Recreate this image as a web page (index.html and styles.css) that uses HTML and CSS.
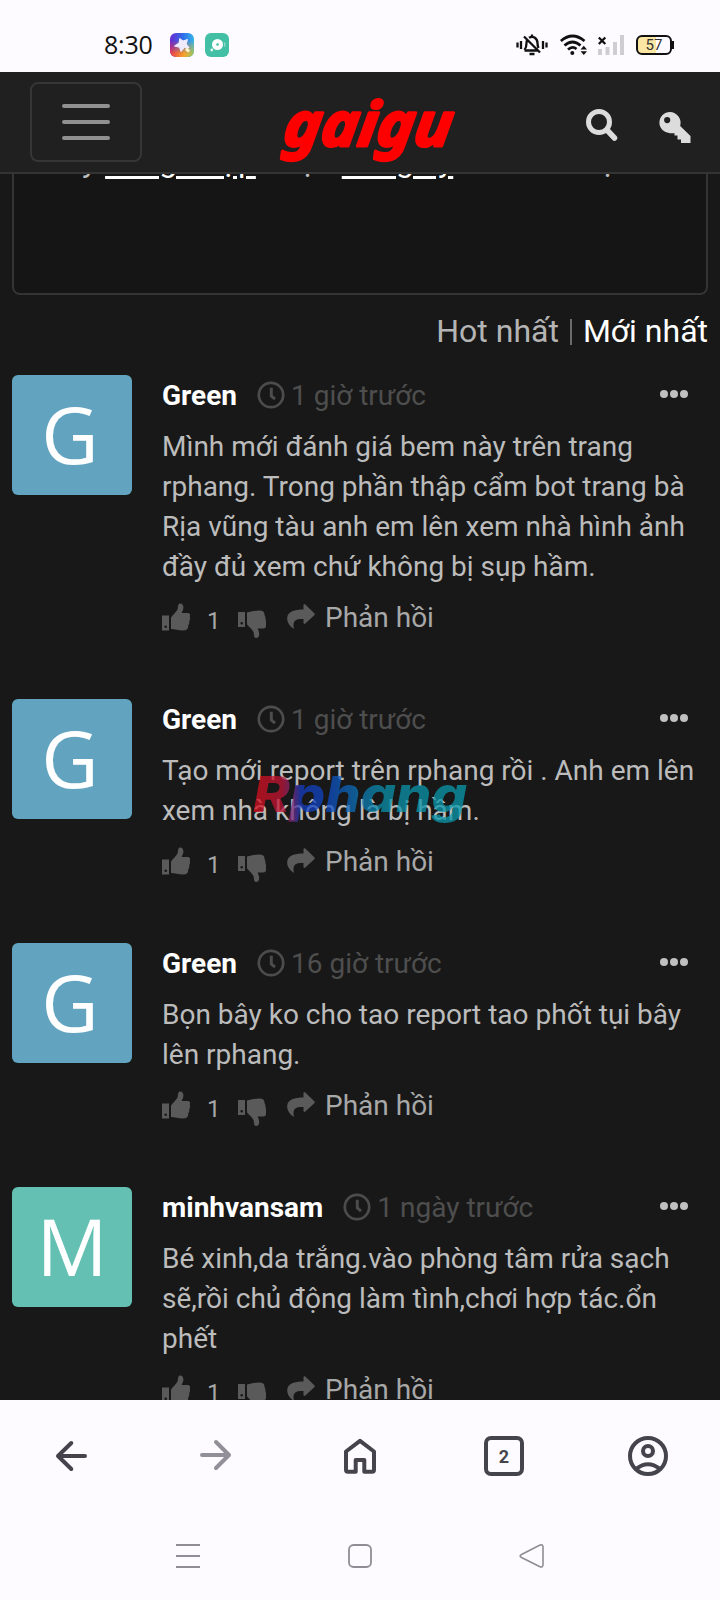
FILE: index.html
```html
<!DOCTYPE html>
<html lang="vi">
<head>
<meta charset="utf-8">
<title>gaigu</title>
<link rel="stylesheet" href="styles.css">
</head>
<body>
<svg width="0" height="0" class="defs">
  <defs>
    <symbol id="clock" viewBox="0 0 28 28"><circle cx="14" cy="14" r="12.2" fill="none" stroke="currentColor" stroke-width="2.7"/><path d="M14.3 6.8v8.2l3.7 3.2" fill="none" stroke="currentColor" stroke-width="3"/></symbol>
    <symbol id="dots" viewBox="0 0 28 8"><circle cx="4" cy="4" r="4"/><circle cx="14" cy="4" r="4"/><circle cx="24" cy="4" r="4"/></symbol>
    <symbol id="thumb" viewBox="0 0 28 28"><path fill-rule="evenodd" d="M0 12.500H7V27.500H0ZM3.700 22.500A1.300 1.300 0 1 0 3.700 25.100A1.300 1.300 0 1 0 3.700 22.500Z"/><path d="M9 14.500C11 11.500 14 9.500 15.500 6.500C16.200 4.500 15.500 1 18 .4C21 .2 21.800 3.500 21.200 6C20.900 7.500 20 8.800 19.700 10H25.500C28.200 10 28.700 12.500 27.800 14C28.200 15.500 28.200 17 27.200 18C27.600 20 27 21.500 26.200 22.500C26.500 25.500 25 27.500 21.500 27.500C16 27.500 13 26 9 26Z"/></symbol>
    <symbol id="thumbdown" viewBox="0 0 28 28"><path fill-rule="evenodd" d="M0 2H7V17H0ZM3.700 12A1.300 1.300 0 1 0 3.700 14.600A1.300 1.300 0 1 0 3.700 12Z"/><path d="M9 2.500C13 1.800 16 .5 21.500 .5C25 .5 26.800 2 26.500 5C27.500 6.500 27.600 8 27.400 9.500C28.400 11 28.400 12.500 27.900 14C28.500 16.500 27.500 18.500 25.500 18.500H19.700C20 20 21.200 22 21.200 24C21.200 26.500 20 28 18 28C15.500 27.800 16.200 24 15.500 22C14 19 11 17 9 14.500Z"/></symbol>
    <symbol id="share" viewBox="0 0 28 26"><path d="M16.500 1.200C16.500 0 17.500 0 18.300 .6L27.300 9.200Q28.300 10.200 27.300 11.200L18.300 19.600C17.500 20.200 16.500 20 16.500 18.800V15C9 14.500 5 16.500 7 25C3 22.500 0 18.500 .2 14C.6 7.500 7.500 5.600 16.500 5.600Z"/></symbol>
  </defs>
</svg>
<div class="screen">
  <header class="status">
    <span class="time">8:30</span>
    <svg class="app" width="24" height="24" viewBox="0 0 24 24">
      <defs><linearGradient id="top" x1="0" x2="1"><stop offset="0" stop-color="#6a2bd0"/><stop offset=".55" stop-color="#2d6ee8"/><stop offset="1" stop-color="#35b6ea"/></linearGradient><linearGradient id="low" x1="0" x2="1" y1=".7" y2="1"><stop offset="0" stop-color="#e7344b"/><stop offset=".6" stop-color="#f5a32c"/><stop offset="1" stop-color="#8bcf6a"/></linearGradient><linearGradient id="fade" x2="0" y2="1"><stop offset=".3" stop-color="#000"/><stop offset=".85" stop-color="#fff"/></linearGradient><mask id="m"><rect width="24" height="24" fill="url(#fade)"/></mask></defs>
      <rect width="24" height="24" rx="6" fill="url(#top)"/><rect width="24" height="24" rx="6" fill="url(#low)" mask="url(#m)"/>
      <path d="M9.800 5.500L13 8L17.500 6.500L16.200 11L19 14.500L14.500 14.500L11 18.500L9.500 14.300L4.500 13L9 10Z" fill="#efeafc" stroke="#efeafc" stroke-width="1" stroke-linejoin="round"/><ellipse cx="17.500" cy="17" rx="2.500" ry="1.700" transform="rotate(40 17.500 17)" fill="#fff3cc"/>
    </svg>
    <svg class="app app-2" width="24" height="24" viewBox="0 0 24 24"><rect width="24" height="24" rx="6" fill="#43bfa6"/><circle cx="12.500" cy="11.500" r="5.500" fill="#fff"/><circle cx="12.500" cy="11.500" r="1.300" fill="#43bfa6"/><circle cx="6.800" cy="17" r="1.400" fill="#e5f7f3"/><path d="M19.500 9.500q1 2 0 4" stroke="#b5e5dc" fill="none"/></svg>
    <div class="indicators">
      <svg width="32" height="22" viewBox="0 0 32 22" fill="none" stroke="#111" stroke-width="2.300"><path d="M1.500 8.500v5M5 7v8M30.500 8.500v5M27 7v8"/><path d="M8.500 16.500H21.500M8.500 16Q10.500 13.500 10.500 9Q10.500 7 11.500 5.500M13 3.800Q16 2 18.500 3.500Q21.500 5.500 21.500 9Q21.500 12 22.500 14M16 .500v2.500M8 2.500L24 18.500M13.500 20h5"/></svg>
      <svg class="wifi" width="28" height="22" viewBox="0 0 28 22" fill="none" stroke="#111" stroke-width="2.700"><path d="M.8 7Q12.500-3 24.500 7M4.500 11.500Q12.500 4.500 20.500 11.500M8 15.500Q12.500 11.500 16.500 15"/><circle cx="12.300" cy="19" r="2" fill="#111" stroke="none"/><path d="M20.500 15.500L23.800 11.800L27 15.500ZM20.500 17.200L23.800 21L27 17.200Z" fill="#111" stroke="none"/></svg>
      <svg class="signal" width="26" height="20" viewBox="0 0 26 20"><path fill="#cfcdd2" d="M0 14h4v6H0zM7.500 12h4v8h-4zM15 7h4v13h-4zM22 0h4v20h-4z"/><path d="M.8 2.500l6.500 6.500m0-6.500L.8 9" stroke="#111" stroke-width="2.300"/></svg>
      <div class="battery">57</div>
    </div>
  </header>
  <nav class="navbar">
    <button class="burger"><i></i><i></i><i></i></button>
    <svg class="logo" width="180" height="80" viewBox="0 0 180 80"><text transform="translate(8 56) skewX(-8)" textLength="168" lengthAdjust="spacingAndGlyphs">gaigu</text></svg>
    <svg class="search" width="34" height="34" viewBox="0 0 34 34" fill="none" stroke="#dcdcdc"><circle cx="14" cy="14" r="10.500" stroke-width="5"/><path d="M22 22l7.500 8" stroke-width="5.500" stroke-linecap="round"/></svg>
    <svg class="key" width="32" height="32" viewBox="0 0 32 32" fill="#dcdcdc"><path fill-rule="evenodd" d="M11 0A11 11 0 0 1 21.200 14L31.500 24V31H22V27.500H18.500V23.500H15.500V21.200H11A10.600 10.600 0 0 1 11 0ZM8.200 5A3.100 3.100 0 1 0 8.200 11.200A3.100 3.100 0 1 0 8.200 5Z"/></svg>
  </nav>
  <main class="page">
    <div class="editor"><p>Hãy <u>đăng nhập</u> <span class="or">hoặc</span> <u class="reg">đăng ký</u> <span class="rest">để bình luận</span></p></div>
    <div class="sort"><span>Hot nhất</span><i></i><b>Mới nhất</b></div>
    <article class="comment">
      <div class="avatar">G</div>
      <div>
        <div class="meta"><strong>Green</strong><svg class="ck"><use href="#clock"/></svg><time>1 giờ trước</time><svg class="more"><use href="#dots"/></svg></div>
        <p class="text">Mình mới đánh giá bem này trên trang<br>rphang. Trong phần thập cẩm bot trang bà<br>Rịa vũng tàu anh em lên xem nhà hình ảnh<br>đầy đủ xem chứ không bị sụp hầm.</p>
        <div class="actions"><svg class="up"><use href="#thumb"/></svg><span class="count">1</span><svg class="down"><use href="#thumbdown"/></svg><svg class="share"><use href="#share"/></svg><span>Phản hồi</span></div>
      </div>
    </article>
    <article class="comment">
      <div class="avatar">G</div>
      <div>
        <div class="meta"><strong>Green</strong><svg class="ck"><use href="#clock"/></svg><time>1 giờ trước</time><svg class="more"><use href="#dots"/></svg></div>
        <p class="text">Tạo mới report trên rphang rồi . Anh em lên<br>xem nhà không là bị hầm.</p>
        <div class="actions"><svg class="up"><use href="#thumb"/></svg><span class="count">1</span><svg class="down"><use href="#thumbdown"/></svg><svg class="share"><use href="#share"/></svg><span>Phản hồi</span></div>
      </div>
    </article>
    <article class="comment">
      <div class="avatar">G</div>
      <div>
        <div class="meta"><strong>Green</strong><svg class="ck"><use href="#clock"/></svg><time>16 giờ trước</time><svg class="more"><use href="#dots"/></svg></div>
        <p class="text">Bọn bây ko cho tao report tao phốt tụi bây<br>lên rphang.</p>
        <div class="actions"><svg class="up"><use href="#thumb"/></svg><span class="count">1</span><svg class="down"><use href="#thumbdown"/></svg><svg class="share"><use href="#share"/></svg><span>Phản hồi</span></div>
      </div>
    </article>
    <article class="comment">
      <div class="avatar green">M</div>
      <div>
        <div class="meta"><strong>minhvansam</strong><svg class="ck"><use href="#clock"/></svg><time>1 ngày trước</time><svg class="more"><use href="#dots"/></svg></div>
        <p class="text">Bé xinh,da trắng.vào phòng tâm rửa sạch<br>sẽ,rồi chủ động làm tình,chơi hợp tác.ổn<br>phết</p>
        <div class="actions"><svg class="up"><use href="#thumb"/></svg><span class="count">1</span><svg class="down"><use href="#thumbdown"/></svg><svg class="share"><use href="#share"/></svg><span>Phản hồi</span></div>
      </div>
    </article>
    <svg class="watermark" width="230" height="66" viewBox="0 0 230 66">
      <defs><linearGradient id="wm" gradientUnits="userSpaceOnUse" x1="8" x2="222" y1="0" y2="0"><stop offset="0" stop-color="#d8101c"/><stop offset=".13" stop-color="#c01436"/><stop offset=".18" stop-color="#7a2a80"/><stop offset=".22" stop-color="#143cc0"/><stop offset=".34" stop-color="#0e48c4"/><stop offset=".5" stop-color="#0d78b4"/><stop offset=".62" stop-color="#0a92aa"/><stop offset="1" stop-color="#0a9aac"/></linearGradient></defs>
      <text x="7" y="46" textLength="214" lengthAdjust="spacingAndGlyphs" fill="url(#wm)">Rphang</text>
    </svg>
  </main>
  <footer>
    <div class="browser-nav">
      <svg width="48" height="48" viewBox="0 0 48 48" fill="none" stroke="#45444c" stroke-width="4" stroke-linecap="round" stroke-linejoin="round"><path d="M37 24H10M23.300 11L10 24L23.300 37"/></svg>
      <svg width="48" height="48" viewBox="0 0 48 48" fill="none" stroke="#918f98" stroke-width="4" stroke-linecap="round" stroke-linejoin="round"><path d="M10 23H37M24 10L37 23L24 36"/></svg>
      <svg width="48" height="48" viewBox="0 0 48 48" fill="none" stroke="#45444c" stroke-width="4" stroke-linejoin="round"><path d="M10 19.500L24 8.800L38 19.500V37.800Q38 39.800 36 39.800H28.300V28H19.700V39.800H12Q10 39.800 10 37.800Z"/></svg>
      <div class="tabs"><span>2</span></div>
      <svg width="48" height="48" viewBox="0 0 48 48" fill="none" stroke="#45444c" stroke-width="4"><circle cx="24" cy="24" r="18"/><circle cx="24" cy="19" r="5"/><path d="M12 37Q24 27.500 36 37"/></svg>
    </div>
    <div class="system-nav">
      <svg width="28" height="28" viewBox="0 0 28 28" stroke="#8f8d95" stroke-width="2"><path d="M2 3h24M2 14h24M2 25h24"/></svg>
      <svg width="28" height="28" viewBox="0 0 28 28" fill="none" stroke="#8f8d95" stroke-width="1.800"><rect x="3" y="3" width="22" height="22" rx="4.500"/></svg>
      <svg width="28" height="28" viewBox="0 0 28 28" fill="none" stroke="#8f8d95" stroke-width="1.600"><path d="M3.500 12.500L21.500 3.200Q25 2 25 5V22.500Q25 26 21.500 24.500L3.500 15.500Q.8 14 3.500 12.500Z"/></svg>
    </div>
  </footer>
</div>
</body>
</html>
```
FILE: styles.css
```css
* { box-sizing: border-box; }
body { margin: 0; font-family: Roboto, "Noto Sans", sans-serif; background: #fdfbff; }
p { margin: 0; }
svg { display: block; flex: none; }
.defs { position: absolute; }
.screen { width: 720px; height: 1600px; display: flex; flex-direction: column; overflow: hidden; background: #fdfbff; }

.status { height: 72px; flex: none; display: flex; align-items: center; padding: 18px 48px 0 104px; }
.time { width: 66px; font: 400 25px/30px "Open Sans", sans-serif; color: #111; letter-spacing: -.2px; margin-top: -2px; }
.app-2 { margin-left: 11px; }
.indicators { margin-left: auto; display: flex; align-items: center; }
.wifi { margin-left: 12px; }
.signal { margin-left: 10px; }
.battery { position: relative; margin-left: 12px; width: 36px; height: 20px; border: 2px solid #111; border-radius: 6px; font-size: 15px; line-height: 17px; text-align: center; color: #333; background: linear-gradient(90deg, #fbe6a4 55%, #fdfbff 57%); }
.battery::after { content: ""; position: absolute; right: -4px; top: 4px; width: 2px; height: 8px; background: #111; }

.navbar { height: 102px; flex: none; display: flex; align-items: flex-start; background: #202020; border-bottom: 2px solid #343434; padding-left: 30px; }
.burger { margin: 10px 0 0; width: 112px; height: 80px; padding: 0 0 0 30px; border: 2px solid #363636; border-radius: 8px; background: none; display: flex; flex-direction: column; justify-content: center; gap: 12px; }
.burger i { width: 48px; height: 4px; border-radius: 2px; background: #909090; }
.logo { margin: 18px 0 0 132px; overflow: visible; }
.logo text { font: italic 700 61px "Noto Sans", sans-serif; fill: #f00; stroke: #f00; stroke-width: 3; stroke-linejoin: round; }
.search { margin: 36px 0 0 131px; }
.key { margin: 40px 0 0 40px; }

.page { position: relative; flex: 1; min-height: 0; overflow: hidden; background: #181818; }
.editor { height: 121px; margin: 0 12px; border: 2px solid #343434; border-top: 0; border-radius: 0 0 8px 8px; background: #151515; overflow: hidden; }
.editor p { margin-top: -33px; padding-left: 28px; font-size: 32px; line-height: 40px; color: #bebebe; white-space: nowrap; }
.editor u { color: #fff; text-decoration-thickness: 3px; text-underline-offset: 4px; }
.sort { height: 80px; padding: 16px 12px 0; display: flex; justify-content: flex-end; font-size: 32px; line-height: 40px; color: #b4b4b4; }
.sort i { width: 2px; height: 26px; margin: 8px 11px 0 11px; background: #6c6c6c; }
.sort b { font-weight: 400; color: #fff; }

.comment { display: grid; grid-template-columns: 120px 1fr; gap: 30px; padding: 0 12px 61px; }
.avatar { width: 120px; height: 120px; padding-right: 4px; border-radius: 6px; background: #62a4c0; color: #fff; font: 500 79px/117px "Open Sans", sans-serif; text-align: center; }
.avatar.green { padding-right: 0; background: #63c0b2; }
.meta { display: flex; align-items: center; height: 40px; font-size: 28px; line-height: 42px; }
.meta strong { font-weight: 700; color: #fff; padding-top: 1px; }
.ck { width: 28px; height: 28px; margin: -1px 0 0 20px; color: #4c4c4c; }
.meta time { margin-left: 6px; padding-top: 1px; color: #4e4e4e; }
.more { width: 28px; height: 8px; margin: -2px 20px 0 auto; fill: #c0c0c0; }
.text { margin: 12px 0 11px; font-size: 28px; line-height: 40px; color: #bcbcbc; white-space: nowrap; }
.actions { display: flex; height: 40px; font-size: 28px; line-height: 40px; color: #a8a8a8; }
.actions svg { fill: #5a5a5a; }
.up { width: 28px; height: 28px; margin-top: 5px; }
.count { margin: 3px 18px 0 17px; width: 13px; font-size: 24px; }
.down { width: 28px; height: 28px; margin-top: 12px; }
.share { width: 28px; height: 26px; margin: 6px 10px 0 21px; }

.watermark { position: absolute; left: 246px; top: 592px; overflow: visible; opacity: .75; }
.watermark text { font: italic 800 50px Inter, sans-serif; }

footer { height: 200px; flex: none; background: #fdfbff; }
.browser-nav { height: 112px; display: grid; grid-template-columns: repeat(5, 1fr); place-items: center; }
.tabs { width: 40px; height: 40px; border: 4px solid #45444c; border-radius: 7px; display: flex; align-items: center; justify-content: center; font-size: 18px; font-weight: 700; color: #45444c; }
.system-nav { display: flex; justify-content: center; gap: 144px; padding-top: 30px; }
```
